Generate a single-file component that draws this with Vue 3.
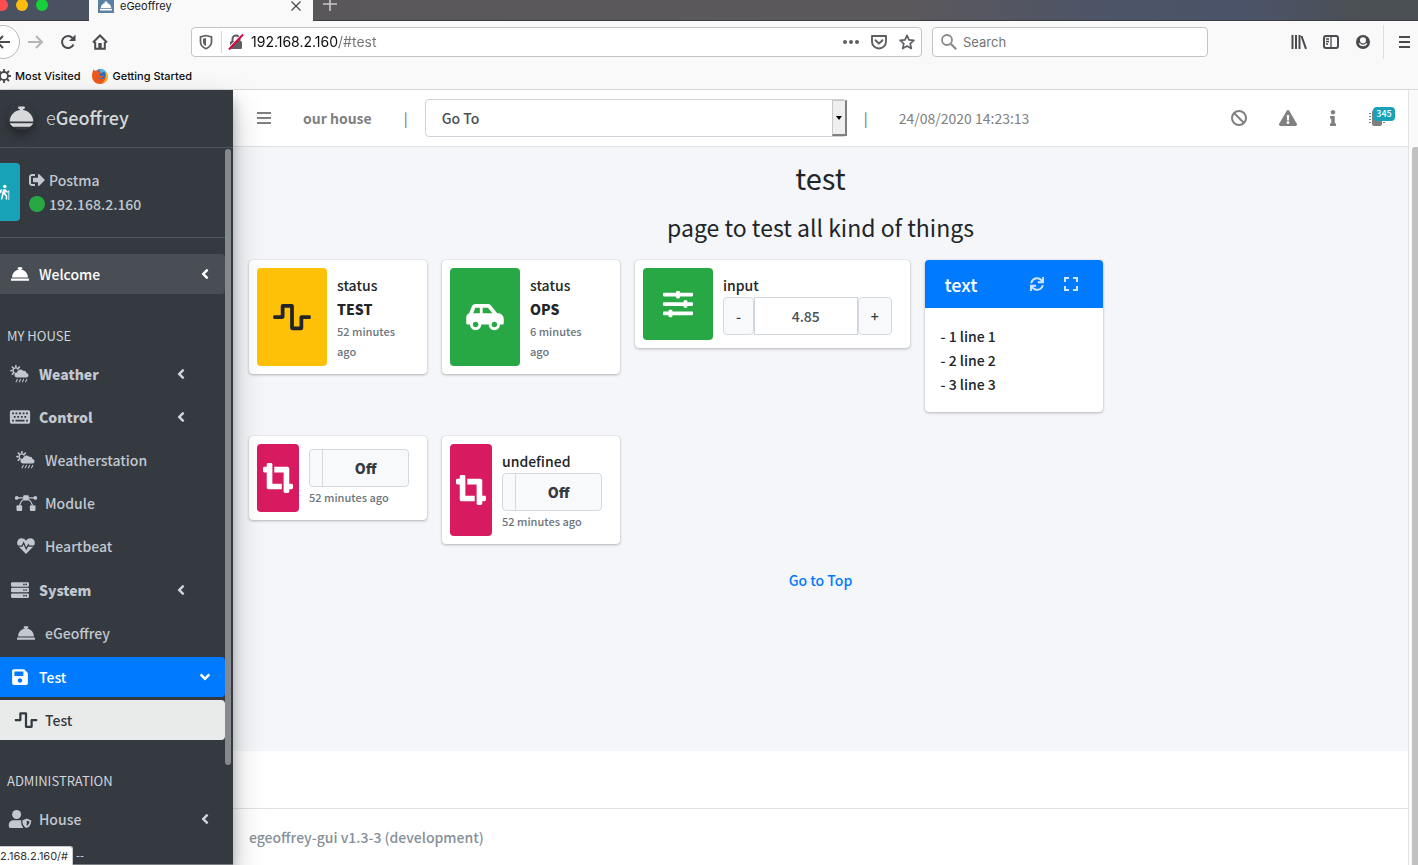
<script setup>
import { ref } from 'vue'

const url = ref('192.168.2.160/#test')
const search = ref('')
const amount = ref('4.85')
const goTo = ref('Go To')

const myHouse = [
  [
    { label: 'Weather', icon: 'weather', bold: true, arrow: 'inset' },
    { label: 'Control', icon: 'keyboard', bold: true, arrow: 'inset' },
    { label: 'Weatherstation', icon: 'weather', nested: true },
    { label: 'Module', icon: 'nodes', nested: true },
    { label: 'Heartbeat', icon: 'heart', nested: true }
  ],
  [
    { label: 'System', icon: 'server', bold: true, arrow: 'inset' },
    { label: 'eGeoffrey', icon: 'bell', nested: true }
  ],
  [
    { label: 'Test', icon: 'save', current: true, arrow: 'down' },
    { label: 'Test', icon: 'wave', nested: true, selected: true }
  ]
]
const administration = [{ label: 'House', icon: 'usershield' }]
const statuses = [
  { value: 'TEST', time: '52 minutes ago', icon: 'wave', tone: 'warning' },
  { value: 'OPS', time: '6 minutes ago', icon: 'car', tone: 'success' }
]
const switches = [{ label: '' }, { label: 'undefined' }]
const lines = ['- 1 line 1', '- 2 line 2', '- 3 line 3']
</script>

<template>
  <svg class="sprite" aria-hidden="true">
    <symbol id="bell" viewBox="0 0 512 512"><path d="M288 130.54V112h16c8.84 0 16-7.16 16-16V80c0-8.84-7.16-16-16-16h-96c-8.84 0-16 7.16-16 16v16c0 8.84 7.16 16 16 16h16v18.54C115.49 146.11 32 239.18 32 352h448c0-112.82-83.49-205.89-192-221.46zM496 384H16c-8.84 0-16 7.16-16 16v32c0 8.84 7.16 16 16 16h480c8.84 0 16-7.16 16-16v-32c0-8.84-7.16-16-16-16z" /></symbol>
    <symbol id="wave" viewBox="0 0 640 512"><path d="M476 480H324a36 36 0 0 1-36-36V96h-96v156a36 36 0 0 1-36 36H16a16 16 0 0 1-16-16v-32a16 16 0 0 1 16-16h112V68a36 36 0 0 1 36-36h152a36 36 0 0 1 36 36v348h96V260a36 36 0 0 1 36-36h140a16 16 0 0 1 16 16v32a16 16 0 0 1-16 16H512v156a36 36 0 0 1-36 36z" /></symbol>
    <symbol id="angle" viewBox="0 0 256 512"><path d="M31.7 239l136-136c9.4-9.4 24.6-9.4 33.9 0l22.6 22.6c9.4 9.4 9.4 24.6 0 33.9L127.9 256l96.4 96.4c9.4 9.4 9.4 24.6 0 33.9L201.7 409c-9.4 9.4-24.6 9.4-33.9 0l-136-136c-9.5-9.4-9.5-24.6-.1-34z" /></symbol>
    <symbol id="save" viewBox="0 0 448 512"><path d="M433.941 129.941l-83.882-83.882A48 48 0 0 0 316.118 32H48C21.49 32 0 53.49 0 80v352c0 26.51 21.49 48 48 48h352c26.51 0 48-21.49 48-48V163.882a48 48 0 0 0-14.059-33.941zM224 416c-35.346 0-64-28.654-64-64 0-35.346 28.654-64 64-64s64 28.654 64 64c0 35.346-28.654 64-64 64zm96-304.52V212c0 6.627-5.373 12-12 12H76c-6.627 0-12-5.373-12-12V108c0-6.627 5.373-12 12-12h228.52c3.183 0 6.235 1.264 8.485 3.515l3.48 3.48A11.996 11.996 0 0 1 320 111.48z" /></symbol>
    <symbol id="server" viewBox="0 0 512 512">
      <path fill-rule="evenodd" d="M32 32h448a32 32 0 0 1 32 32v64a32 32 0 0 1-32 32H32a32 32 0 0 1-32-32V64a32 32 0 0 1 32-32zM432 72a24 24 0 1 0 0 48a24 24 0 1 0 0-48zM368 72a24 24 0 1 0 0 48a24 24 0 1 0 0-48zM32 192h448a32 32 0 0 1 32 32v64a32 32 0 0 1-32 32H32a32 32 0 0 1-32-32v-64a32 32 0 0 1 32-32zM432 232a24 24 0 1 0 0 48a24 24 0 1 0 0-48zM368 232a24 24 0 1 0 0 48a24 24 0 1 0 0-48zM32 352h448a32 32 0 0 1 32 32v64a32 32 0 0 1-32 32H32a32 32 0 0 1-32-32v-64a32 32 0 0 1 32-32zM432 392a24 24 0 1 0 0 48a24 24 0 1 0 0-48zM368 392a24 24 0 1 0 0 48a24 24 0 1 0 0-48z" />
    </symbol>
    <symbol id="keyboard" viewBox="0 0 576 512">
      <path fill-rule="evenodd" d="M48 64h480a48 48 0 0 1 48 48v288a48 48 0 0 1-48 48H48a48 48 0 0 1-48-48V112a48 48 0 0 1 48-48zM64 128v52h52v-52zM160 128v52h52v-52zM256 128v52h60v-52zM364 128v52h52v-52zM460 128v52h52v-52zM112 228v52h52v-52zM208 228v52h52v-52zM312 228v52h52v-52zM412 228v52h52v-52zM64 336v46h52v-46zM160 336v46h256v-46zM460 336v46h52v-46z" />
    </symbol>
    <symbol id="weather" viewBox="0 0 576 512">
      <g stroke="currentColor" stroke-width="34" stroke-linecap="round" fill="none">
        <circle cx="170" cy="160" r="76" />
        <path d="M170 20v34M170 274v24M30 160h34M70 60l26 26M270 60l-24 24M70 260l26-26" stroke-width="44" />
      </g>
      <path class="halo" d="M200 372a86 86 0 0 1-10-170a110 110 0 0 1 190-60a92 92 0 0 1 106 72a80 80 0 0 1-6 158z" />
      <path d="M200 358a70 70 0 0 1 0-142a100 100 0 0 1 176-50a80 80 0 0 1 98 62a66 66 0 0 1 6 130z" />
      <path d="M210 410l-34 70M300 410l-34 70M390 410l-34 70M480 410l-34 70" stroke="currentColor" stroke-width="30" stroke-linecap="round" />
    </symbol>
    <symbol id="nodes" viewBox="0 0 640 512">
      <path d="M64 112h192M384 112h192M256 150Q160 210 136 320M384 150Q480 210 504 320" stroke="currentColor" stroke-width="34" fill="none" />
      <circle cx="56" cy="112" r="54" /><circle cx="584" cy="112" r="54" />
      <rect x="240" y="32" width="160" height="150" rx="28" /><rect x="50" y="320" width="160" height="160" rx="28" /><rect x="430" y="320" width="160" height="160" rx="28" />
    </symbol>
    <symbol id="heart" viewBox="0 0 512 512">
      <path d="M256 484L45 268C-10 210-8 120 42 70C96 16 190 22 256 104C322 22 416 16 470 70C520 120 522 210 467 268z" />
      <path class="cut" d="M0 262h146l42-96l74 170l60-116l24 42h166" />
    </symbol>
    <symbol id="usershield" viewBox="0 0 640 512">
      <circle cx="224" cy="128" r="128" />
      <path d="M134 288h180c30 0 38 4 38 20c0 90 18 140 62 204H48a48 48 0 0 1-48-48v-42a134 134 0 0 1 134-134z" />
      <path fill-rule="evenodd" d="M512 242l128 54c0 108-42 178-128 216c-86-38-128-108-128-216zM512 296v158c52-28 76-68 78-124z" />
    </symbol>
    <symbol id="sliders" viewBox="0 0 512 512"><path d="M496 384H160v-16c0-8.8-7.2-16-16-16h-32c-8.8 0-16 7.2-16 16v16H16c-8.8 0-16 7.2-16 16v32c0 8.8 7.2 16 16 16h80v16c0 8.8 7.2 16 16 16h32c8.8 0 16-7.2 16-16v-16h336c8.8 0 16-7.2 16-16v-32c0-8.8-7.2-16-16-16zm0-160h-80v-16c0-8.8-7.2-16-16-16h-32c-8.8 0-16 7.2-16 16v16H16c-8.8 0-16 7.2-16 16v32c0 8.8 7.2 16 16 16h336v16c0 8.8 7.2 16 16 16h32c8.8 0 16-7.2 16-16v-16h80c8.8 0 16-7.2 16-16v-32c0-8.8-7.2-16-16-16zm0-160H288V48c0-8.8-7.2-16-16-16h-32c-8.8 0-16 7.2-16 16v16H16C7.2 64 0 71.2 0 80v32c0 8.8 7.2 16 16 16h208v16c0 8.8 7.2 16 16 16h32c8.8 0 16-7.2 16-16v-16h208c8.8 0 16-7.2 16-16V80c0-8.8-7.2-16-16-16z" /></symbol>
    <symbol id="crop" viewBox="0 0 512 512"><path d="M488 352h-40V96c0-17.67-14.33-32-32-32H192v96h160v328c0 13.25 10.75 24 24 24h48c13.25 0 24-10.75 24-24v-40h40c13.25 0 24-10.75 24-24v-48c0-13.26-10.75-24-24-24zM160 24c0-13.26-10.75-24-24-24H88C74.75 0 64 10.74 64 24v40H24C10.75 64 0 74.74 0 88v48c0 13.25 10.75 24 24 24h40v256c0 17.67 14.33 32 32 32h224v-96H160V24z" /></symbol>
    <symbol id="car" viewBox="0 0 640 512"><path d="M544 192h-16L419.22 56.02A64.025 64.025 0 0 0 369.24 32H155.33c-26.17 0-49.7 15.93-59.42 40.23L48 194.26C20.44 201.4 0 226.21 0 256v112c0 8.84 7.16 16 16 16h48c0 53.02 42.98 96 96 96s96-42.98 96-96h128c0 53.02 42.98 96 96 96s96-42.98 96-96h48c8.84 0 16-7.16 16-16v-80c0-53.02-42.98-96-96-96zM160 432c-26.47 0-48-21.53-48-48s21.53-48 48-48 48 21.53 48 48-21.53 48-48 48zm72-240H116.93l38.4-96H232v96zm48 0V96h89.24l76.8 96H280zm200 240c-26.47 0-48-21.53-48-48s21.53-48 48-48 48 21.53 48 48-21.53 48-48 48z" /></symbol>
    <symbol id="signout" viewBox="0 0 512 512"><path d="M497 273L329 441c-15 15-41 4.5-41-17v-96H152c-13.3 0-24-10.7-24-24v-96c0-13.3 10.7-24 24-24h136V88c0-21.4 25.9-32 41-17l168 168c9.3 9.4 9.3 24.6 0 34zM192 436v-40c0-6.6-5.4-12-12-12H96c-17.7 0-32-14.3-32-32V160c0-17.7 14.3-32 32-32h84c6.6 0 12-5.4 12-12V76c0-6.6-5.4-12-12-12H96c-53 0-96 43-96 96v192c0 53 43 96 96 96h84c6.6 0 12-5.4 12-12z" /></symbol>
    <symbol id="sync" viewBox="0 0 512 512"><path d="M440.65 12.57l4 82.77A247.16 247.16 0 0 0 255.83 8C134.73 8 33.91 94.92 12.29 209.82A12 12 0 0 0 24.09 224h49.05a12 12 0 0 0 11.67-9.26 175.91 175.91 0 0 1 317-56.94l-101.46-4.86a12 12 0 0 0-12.57 12v47.41a12 12 0 0 0 12 12H500a12 12 0 0 0 12-12V12a12 12 0 0 0-12-12h-47.37a12 12 0 0 0-11.98 12.57zM255.83 432a175.61 175.61 0 0 1-146-77.8l101.8 4.87a12 12 0 0 0 12.57-12v-47.4a12 12 0 0 0-12-12H12a12 12 0 0 0-12 12V500a12 12 0 0 0 12 12h47.35a12 12 0 0 0 12-12.6l-4.15-82.57A247.17 247.17 0 0 0 255.83 504c121.11 0 221.93-86.92 243.55-201.82a12 12 0 0 0-11.8-14.18h-49.05a12 12 0 0 0-11.67 9.26A175.86 175.86 0 0 1 255.83 432z" /></symbol>
    <symbol id="expand" viewBox="0 0 14 14"><path d="M1 5V1h4M9 1h4v4M13 9v4H9M5 13H1V9" fill="none" stroke="currentColor" stroke-width="2" /></symbol>
    <symbol id="bars" viewBox="0 0 14 14"><path d="M0 2h14M0 7h14M0 12h14" stroke="currentColor" stroke-width="2" /></symbol>
    <symbol id="ban" viewBox="0 0 16 16"><path d="M3 3l10 10" stroke="currentColor" stroke-width="2" /><circle cx="8" cy="8" r="7" fill="none" stroke="currentColor" stroke-width="2" /></symbol>
    <symbol id="warn" viewBox="0 0 18 16"><path fill-rule="evenodd" d="M9 0a1.500 1.500 0 0 1 1.300.8l7.500 13a1.500 1.500 0 0 1-1.300 2.200h-15a1.500 1.500 0 0 1-1.300-2.200l7.500-13a1.500 1.500 0 0 1 1.300-.8zM7.800 5l.3 5.500h1.800l.3-5.500zM9 11.300a1.400 1.400 0 1 0 0 2.800a1.400 1.400 0 1 0 0-2.800z" /></symbol>
    <symbol id="info" viewBox="0 0 192 512"><path d="M20 424.229h20V279.771H20c-11.046 0-20-8.954-20-20V212c0-11.046 8.954-20 20-20h112c11.046 0 20 8.954 20 20v212.229h20c11.046 0 20 8.954 20 20V492c0 11.046-8.954 20-20 20H20c-11.046 0-20-8.954-20-20v-47.771c0-11.046 8.954-20 20-20zM96 0C56.235 0 24 32.235 24 72s32.235 72 72 72 72-32.235 72-72S135.764 0 96 0z" /></symbol>
    <symbol id="chip" viewBox="0 0 16 16"><rect x="3" y="0" width="10" height="16" rx="2" /><path d="M1 3v11M15 3v11" stroke="currentColor" stroke-width="2" stroke-dasharray="1 2" /></symbol>
    <symbol id="hiker" viewBox="0 0 16 20"><circle cx="9" cy="3" r="2.200" /><path d="M7 6.500h3.500L12 9h2v1.500h-3L10 9.300v3l2 2.200v5h-1.800v-4.200L7.500 12.800L5.800 19.500H4L6 10z" /><path d="M5.800 6.500L4.500 11.500L1.800 11c0-2.500 1-4.500 4-4.500z" /><path d="M14 8v12" stroke="currentColor" stroke-width="1" /></symbol>
  </svg>

  <div class="window">
    <header class="chrome">
      <div class="tabstrip">
        <div class="lights"><i class="red"></i><i class="yellow"></i><i class="green"></i></div>
        <div class="tab">
          <span class="favicon"><svg><use href="#bell" /></svg></span>
          <span class="tab-title">eGeoffrey</span>
          <button class="plain tab-close" aria-label="Close tab">
            <svg viewBox="0 0 10 10"><path d="M0.500 0.500l9 9M9.500 0.500l-9 9" stroke="currentColor" stroke-width="1.300" /></svg>
          </button>
        </div>
        <button class="plain new-tab" aria-label="New tab">
          <svg viewBox="0 0 14 14"><path d="M7 0v14M0 7h14" stroke="currentColor" stroke-width="1.600" /></svg>
        </button>
      </div>

      <div class="toolbar">
        <div class="nav-buttons">
          <button class="plain back" aria-label="Back"><svg viewBox="0 0 16 16"><path d="M15 8H2M8 2L2 8l6 6" /></svg></button>
          <button class="plain forward" aria-label="Forward"><svg viewBox="0 0 16 16"><path d="M0 8h14M8 2l6 6l-6 6" /></svg></button>
          <button class="plain" aria-label="Reload"><svg viewBox="0 0 16 16"><path d="M13.500 10.500A6 6 0 1 1 12.500 4" /><path class="solid" d="M15.500 0.500v6.500H9z" /></svg></button>
          <button class="plain" aria-label="Home"><svg viewBox="0 0 16 16"><path d="M1 8.500L8 1.500l7 7M3.200 8v6.800h9.600V8" /><path class="solid" d="M6.300 9h3.400v6H6.300z" /></svg></button>
        </div>
        <div class="urlbar">
          <svg class="i16" viewBox="0 0 16 16"><path d="M8 1.500L2.500 2.800V8c0 3.500 2 5.300 5.500 6.700c3.500-1.400 5.500-3.200 5.500-6.700V2.800z" fill="none" stroke="currentColor" stroke-width="1.700" /><path d="M8 4L5 4.800V8c0 2 1 3 3 4z" /></svg>
          <span class="rule"></span>
          <svg class="i16" viewBox="0 0 16 16"><path d="M4.500 8V5a3.500 3.500 0 0 1 7 0v3" fill="none" stroke="currentColor" stroke-width="2" /><rect x="2" y="7" width="12" height="8" rx="1.500" /><path d="M0.500 14L13.500 1" stroke="#fff" stroke-width="1.500" /><path d="M1 15.500L15 0.500" stroke="#d7003f" stroke-width="2" /></svg>
          <input v-model="url" class="url" type="text" aria-label="Address">
          <button class="plain" aria-label="Page actions"><svg class="i16" viewBox="0 0 16 16"><circle cx="2" cy="8" r="2" /><circle cx="8" cy="8" r="2" /><circle cx="14" cy="8" r="2" /></svg></button>
          <button class="plain" aria-label="Save to Pocket"><svg class="i16" viewBox="0 0 16 16"><path d="M1 2h14v5.500a7 7 0 0 1-14 0z M4.500 6.200L8 9.600l3.500-3.400" fill="none" stroke="currentColor" stroke-width="1.900" stroke-linejoin="round" stroke-linecap="round" /></svg></button>
          <button class="plain" aria-label="Bookmark"><svg class="i16" viewBox="0 0 16 16"><path d="M8 1.300l2 4.500l4.900.5l-3.700 3.300l1.100 4.900L8 12l-4.300 2.500l1.100-4.900L1.100 6.300L6 5.800z" fill="none" stroke="currentColor" stroke-width="1.700" stroke-linejoin="round" /></svg></button>
        </div>
        <div class="searchbar">
          <svg class="i16" viewBox="0 0 16 16"><circle cx="6" cy="6" r="5" fill="none" stroke="currentColor" stroke-width="1.800" /><path d="M9.700 9.700l5.500 5.500" stroke="currentColor" stroke-width="2.200" /></svg>
          <input v-model="search" type="search" placeholder="Search" aria-label="Search">
        </div>
        <div class="tools">
          <button class="plain" aria-label="Library"><svg class="i16" viewBox="0 0 16 16"><path d="M1.500 1v14M5 1v14M8.500 1v14M10.500 2l4.500 12.800" stroke="currentColor" stroke-width="2" /></svg></button>
          <button class="plain" aria-label="Sidebars"><svg class="i16" viewBox="0 0 16 16"><rect x="1" y="2" width="14" height="12" rx="2" fill="none" stroke="currentColor" stroke-width="2" /><path d="M8 2v12M3 5h3M3 7.500h3M3 10h2" stroke="currentColor" stroke-width="1.300" /></svg></button>
          <button class="plain" aria-label="Account"><svg class="i16" viewBox="0 0 16 16"><path fill-rule="evenodd" d="M8 1a7 7 0 1 0 0 14A7 7 0 1 0 8 1zM8 3.300a3 3 0 0 1 0 6.100a3 3 0 0 1 0-6.100zM3.600 9.300h1.500a3.600 3.600 0 0 0 5.800 0h1.500a4.700 4.700 0 0 1-8.800 0z" /></svg></button>
        </div>
        <button class="plain app-menu" aria-label="Open menu"><svg viewBox="0 0 14 14"><path d="M1 2h11M1 7h11M1 12h11" stroke="currentColor" stroke-width="2" /></svg></button>
      </div>

      <nav class="bookmarks">
        <a href="#"><svg class="gear" viewBox="0 0 14 14"><circle cx="7" cy="7" r="4" fill="none" stroke="currentColor" stroke-width="1.800" /><path d="M7 0v3M7 11v3M0 7h3M11 7h3M2 2l2 2M10 10l2 2M2 12l2-2M10 4l2-2" stroke="currentColor" stroke-width="1.800" /></svg>Most Visited</a>
        <a href="#"><svg class="fox" viewBox="0 0 16 16"><circle cx="8.500" cy="7.500" r="6.500" fill="#2d6fc0" /><path d="M7 1.500c3-1 6 0 7 3c-2-1-4-.5-5 1z" fill="#58b5ec" /><path d="M1.500 1.500c1 1 1.800 1.300 3.500 1.200c1-.7 2-.9 2.700-.9c-1.200.8-1.300 1.700-1 2.300c1 .3 2 .2 2.300.7c-.2 1-1.600 1-1.800 2c1 1 2.800 2.200 5 .4c-.6 2.800-4.500 3.800-6.700 2.300c2.500 2.800 7 2 8.200-1.400c.5-1.600.3-3-.5-4.600c2.500 2 3 5 2.300 7.300C14.500 14 11.500 16 8 16c-4.500 0-8-3.500-8-8c0-2.500.7-4.500 1.500-6.500z" fill="#ee5a1c" /><path d="M13.300 3.300c2.500 2 3 5 2.300 7.300c-.9 2.800-3.200 4.700-6 5.200c3.200-2 5-6 3.700-12.500z" fill="#fbb42c" /></svg>Getting Started</a>
      </nav>
    </header>

    <div class="page">
      <aside class="sidebar">
        <a class="brand" href="#"><svg><use href="#bell" /></svg><span>e<b>Geoffrey</b></span></a>
        <div class="side-scroll">
          <div class="user">
            <span class="avatar"><svg><use href="#hiker" /></svg></span>
            <div class="user-lines">
              <a href="#"><svg><use href="#signout" /></svg>Postma</a>
              <a href="#"><i class="dot"></i>192.168.2.160</a>
            </div>
          </div>
          <nav class="menu">
            <a class="item welcome" href="#"><svg class="ico"><use href="#bell" /></svg><span>Welcome</span><svg class="arrow"><use href="#angle" /></svg></a>
            <h2>MY HOUSE</h2>
            <div v-for="(group, g) in myHouse" :key="g" class="group">
              <a v-for="item in group" :key="item.icon + item.label" href="#" class="item" :class="{ nested: item.nested, bold: item.bold, current: item.current, selected: item.selected }">
                <svg class="ico"><use :href="'#' + item.icon" /></svg><span>{{ item.label }}</span>
                <svg v-if="item.arrow" class="arrow" :class="item.arrow"><use href="#angle" /></svg>
              </a>
            </div>
            <h2>ADMINISTRATION</h2>
            <a v-for="item in administration" :key="item.label" href="#" class="item">
              <svg class="ico"><use :href="'#' + item.icon" /></svg><span>{{ item.label }}</span>
              <svg class="arrow"><use href="#angle" /></svg>
            </a>
            <div class="more">--</div>
          </nav>
          <i class="side-thumb"></i>
        </div>
      </aside>

      <div class="body">
        <div class="topbar">
          <button class="plain" aria-label="Toggle menu"><svg class="bars"><use href="#bars" /></svg></button>
          <b class="house">our house</b>
          <span class="pipe">|</span>
          <div class="select">
            <select v-model="goTo" aria-label="Go to page"><option>Go To</option></select>
            <i class="select-arrow"></i>
          </div>
          <span class="pipe">|</span>
          <time>24/08/2020 14:23:13</time>
          <div class="status-icons">
            <a href="#" aria-label="Blocked"><svg class="w16"><use href="#ban" /></svg></a>
            <a href="#" aria-label="Warnings"><svg class="w18"><use href="#warn" /></svg></a>
            <a href="#" aria-label="Information"><svg class="w6"><use href="#info" /></svg></a>
            <a href="#" aria-label="Modules" class="badged"><svg class="w16"><use href="#chip" /></svg><span class="badge">345</span></a>
          </div>
        </div>

        <main>
          <h1>test</h1>
          <p class="subtitle">page to test all kind of things</p>
          <div class="cards">
            <section v-for="s in statuses" :key="s.value" class="card info">
              <span class="tile" :class="s.tone"><svg class="wide"><use :href="'#' + s.icon" /></svg></span>
              <div class="content"><span>status</span><b>{{ s.value }}</b><small>{{ s.time }}</small></div>
            </section>
            <section class="card info span3">
              <span class="tile success"><svg class="square"><use href="#sliders" /></svg></span>
              <div class="content">
                <label for="amount">input</label>
                <div class="stepper"><button>-</button><input id="amount" v-model="amount" type="text"><button class="plus">+</button></div>
              </div>
            </section>
            <section class="card">
              <div class="card-head"><h3>text</h3><button class="plain" aria-label="Refresh"><svg><use href="#sync" /></svg></button><button class="plain" aria-label="Maximize"><svg><use href="#expand" /></svg></button></div>
              <div class="card-body"><div v-for="l in lines" :key="l">{{ l }}</div></div>
            </section>
          </div>
          <div class="cards">
            <section v-for="(s, i) in switches" :key="i" class="card info">
              <span class="tile narrow"><svg class="square"><use href="#crop" /></svg></span>
              <div class="content">
                <span v-if="s.label">{{ s.label }}</span>
                <button class="toggle" role="switch" aria-checked="false"><i></i><b>Off</b></button>
                <small>52 minutes ago</small>
              </div>
            </section>
          </div>
          <a class="to-top" href="#">Go to Top</a>
        </main>
        <footer>egeoffrey-gui v1.3-3 (development)</footer>
      </div>
      <div class="page-scroll"><i></i></div>
    </div>
    <div class="link-status">2.168.2.160/#</div>
  </div>
</template>

<style>
body { margin: 0; }
</style>

<style scoped>
* { box-sizing: border-box; }
.sprite { position: absolute; width: 0; height: 0; }
svg { display: block; fill: currentColor; flex: none; }
a { color: inherit; text-decoration: none; }
b { font-weight: 900; }
.plain { border: 0; padding: 0; background: none; color: inherit; font: inherit; display: flex; align-items: center; justify-content: center; }
.halo { fill: #343a40; }
.cut { fill: none; stroke: #343a40; stroke-width: 36; }
.i16, .w16 { width: 16px; height: 16px; }
.window { height: 100vh; display: flex; flex-direction: column; overflow: hidden; position: relative; font: 500 14px/24px "Noto Sans CJK SC", "Noto Sans", sans-serif; color: #212529; }

/* browser chrome */
.chrome { flex: none; background: #f9f9fa; border-bottom: 1px solid #d9d9dc; font-family: Inter, "Liberation Sans", sans-serif; font-weight: 400; color: #4a4a4f; }
.tabstrip { height: 21px; display: flex; background: linear-gradient(90deg, #4a5161 0, #4a5161 88px, #5a575b 320px, #5b585b 900px, #4c5468 1120px, #4b5368 1250px, #4b5054 1360px); border-bottom: 1px solid #3d3e44; }
.lights { width: 89px; display: flex; gap: 8px; margin-left: -4px; }
.lights i { width: 12px; height: 12px; border-radius: 50%; margin-top: -1px; }
.red { background: #fc4e50; }
.yellow { background: #fdbc10; }
.green { background: #17cf3a; }
.tab { width: 224px; height: 21px; margin-left: 4px; padding: 0 12px 10px 9px; background: #f9f9fa; display: flex; align-items: center; gap: 6px; }
.favicon { width: 16px; height: 14px; background: #5b7ea3; color: #fff; display: flex; align-items: center; justify-content: center; }
.favicon svg { width: 12px; height: 12px; }
.tab-title { flex: 1; font-size: 11px; line-height: 12px; color: #18181a; }
.tab-close svg { width: 10px; height: 10px; }
.new-tab { color: #c8c9ce; margin: -12px 0 0 10px; }
.new-tab svg { width: 14px; height: 14px; }
.toolbar { height: 41px; display: flex; align-items: center; }
.nav-buttons { width: 191px; display: flex; gap: 16px; }
.nav-buttons svg { width: 16px; height: 16px; fill: none; stroke: currentColor; stroke-width: 2; }
.nav-buttons .solid { fill: currentColor; stroke: none; }
.back { width: 34px; height: 34px; border: 1px solid #b9b9bc; border-radius: 50%; background: #fff; margin-left: -14px; margin-right: -8px; }
.forward { color: #b5b5b8; }
.urlbar, .searchbar { height: 30px; background: #fff; border: 1px solid #c4c4c6; border-radius: 4px; display: flex; align-items: center; color: #5f5f63; }
.urlbar { flex: 1; padding: 0 6px; gap: 12px; min-width: 0; }
.urlbar .rule { width: 1px; height: 22px; background: #d7d7db; margin: 0 -6px 0 -5px; }
.urlbar input, .searchbar input { flex: 1; min-width: 0; border: 0; padding: 0; outline: 0; font: 14px/20px Inter, "Liberation Sans", sans-serif; }
.url { color: transparent; background: linear-gradient(90deg, #0c0c0d 88px, #737373 88px) text; margin-left: -5px; }
.searchbar { width: 276px; margin-left: 10px; padding: 0 8px; gap: 6px; color: #8a8a8e; }
.searchbar input { background: none; font-size: 13px; color: #333; }
.searchbar input::placeholder { color: #737373; opacity: 1; }
.tools { display: flex; gap: 16px; margin-left: 83px; }
.app-menu { height: 34px; margin-left: 12px; border-left: 1px solid #dedee0; padding: 0 6px 0 14px; }
.app-menu svg { width: 14px; height: 14px; }
.bookmarks { height: 27px; display: flex; gap: 12px; font-size: 11px; line-height: 14px; font-weight: 500; color: #0c0c0d; align-items: center; margin-left: -3px; }
.bookmarks a { display: flex; align-items: center; gap: 4px; }
.gear { width: 14px; height: 14px; color: #4a4a4f; }
.fox { width: 16px; height: 16px; }

/* sidebar */
.page { flex: 1; min-height: 0; display: flex; }
.sidebar { width: 233px; flex: none; background: #343a40; color: #c2c7d0; display: flex; flex-direction: column; box-shadow: 0 14px 28px rgba(0,0,0,.25), 0 10px 10px rgba(0,0,0,.22); position: relative; z-index: 1; border-bottom: 1px solid #7b7f84; }
.brand { height: 58px; flex: none; border-bottom: 1px solid #4b545c; display: flex; align-items: center; gap: 11px; padding: 0 0 4px 8px; font-size: 18px; font-weight: 300; color: #d6d8d9; }
.brand svg { width: 27px; height: 27px; border-radius: 50%; box-shadow: 0 6px 8px rgba(0,0,0,.3); }
.brand b { font-weight: 500; }
.side-scroll { flex: 1; min-height: 0; overflow: hidden; position: relative; padding-right: 8px; }
.side-thumb { position: absolute; right: 2px; top: 1px; width: 6px; height: 86%; border-radius: 3px; background: #86898d; }
.user { height: 90px; display: flex; align-items: center; gap: 9px; padding-bottom: 2px; border-bottom: 1px solid #4f5962; }
.avatar { width: 20px; height: 58px; background: #17a2b8; border-radius: 0 4px 4px 0; color: #fff; display: flex; align-items: center; }
.avatar svg { width: 16px; height: 16px; margin-left: -4px; }
.user-lines a { display: flex; align-items: center; gap: 4px; }
.user-lines svg { width: 16px; height: 16px; }
.dot { width: 16px; height: 16px; border-radius: 50%; background: #28a745; }
.menu { padding-top: 16px; }
.menu h2 { margin: 0; padding: 31px 0 8px 7px; font: inherit; font-size: 13px; font-weight: 400; line-height: 21px; color: #d0d4db; }
.group { display: flex; flex-direction: column; gap: 3px; margin-bottom: 4px; }
.group + h2 { margin-top: -5px; }
.item { height: 40px; display: flex; align-items: center; padding: 0 16px 0 8px; border-radius: 0 4px 4px 0; }
.item.nested { padding-left: 14px; }
.item span { flex: 1; }
.ico { width: 24px; height: 18px; margin-right: 7px; }
.arrow { width: 8px; height: 16px; color: #d0d4db; }
.arrow.inset { margin-right: 24px; }
.arrow.down { transform: rotate(-90deg); color: #fff; }
.item.bold { font-weight: 900; }
.welcome { background: #494e54; color: #fff; }
.welcome .arrow { color: #fff; }
.current { background: #007bff; color: #fff; }
.selected { background: #e9ebea; color: #343a40; }
.more { padding: 10px 0 0 76px; font-size: 11px; line-height: 12px; }

/* top bar */
.body { flex: 1; min-width: 0; display: flex; flex-direction: column; background: #fff; }
.topbar { height: 57px; flex: none; border-bottom: 1px solid #dee2e6; display: flex; align-items: center; padding: 0 13px 0 24px; color: #808080; }
.bars { width: 14px; height: 14px; }
.house { margin: 0 32px; font-weight: 700; }
.pipe { width: 4px; }
.select { width: 422px; height: 38px; margin: 0 17px; position: relative; }
select { appearance: none; width: 100%; height: 100%; border: 1px solid #ced4da; border-radius: 4px; background: #fff; padding: 0 16px; font: inherit; color: #495057; }
.select-arrow { position: absolute; right: 0; top: 1px; bottom: 1px; width: 15px; background: #efefef; border: 1px solid #c8c8c8; border-right: 2px solid #808080; border-bottom: 2px solid #808080; display: flex; align-items: center; justify-content: center; pointer-events: none; }
.select-arrow::after { content: ""; border: 3px solid transparent; border-top: 4px solid #000; border-bottom: 0; }
time { margin-left: 31px; font-weight: 400; }
.status-icons { margin-left: auto; display: flex; align-items: center; gap: 32px; }
.w18 { width: 18px; height: 16px; }
.w6 { width: 8px; height: 16px; }
.badged { position: relative; width: 26px; }
.badge { position: absolute; left: 4px; top: -3px; width: 22px; height: 14px; border-radius: 4px; background: #17a2b8; color: #fff; font-size: 9px; line-height: 14px; text-align: center; }

/* content */
main { flex: 1; background: #f4f6f9; padding: 11px 16px 0; margin-bottom: 57px; text-align: center; }
h1 { margin: 0; font-size: 29px; line-height: 38px; font-weight: 400; }
.subtitle { margin: 16px 0 18px; font-size: 23px; line-height: 30px; font-weight: 400; }
.cards { display: grid; grid-template-columns: repeat(12, 1fr); gap: 15px; align-items: start; text-align: left; margin-bottom: 24px; }
.card { grid-column: span 2; background: #fff; border-radius: 4px; overflow: hidden; box-shadow: 0 0 1px rgba(0,0,0,.2), 0 1px 3px rgba(0,0,0,.25); }
.span3 { grid-column: span 3; }
.info { display: flex; padding: 8px; }
.tile { width: 70px; flex: none; border-radius: 4px; display: flex; align-items: center; justify-content: center; color: #fff; }
.tile.narrow { width: 42px; background: #d81b60; }
.warning { background: #ffc107; color: #212529; }
.success { background: #28a745; }
.wide { width: 38px; height: 30px; }
.square { width: 30px; height: 30px; }
.content { flex: 1; min-width: 0; padding: 5px 10px; display: flex; flex-direction: column; }
small { font-size: 11px; line-height: 20px; color: #6c757d; }
.stepper { display: flex; height: 38px; }
.stepper button, .toggle { background: #f8f9fa; border: 1px solid #d5d9dd; border-radius: 4px; font: inherit; color: #343a40; padding: 0; }
.stepper button { width: 31px; }
.stepper .plus { width: 34px; }
.stepper input { width: 104px; border: 1px solid #ced4da; text-align: center; font: inherit; color: #495057; padding: 0; }
.card-head { background: #007bff; color: #fff; height: 48px; padding: 0 25px 0 20px; display: flex; align-items: center; gap: 20px; }
.card-head h3 { margin: 0; flex: 1; font-size: 18px; font-weight: 500; }
.card-head svg { width: 14px; height: 14px; color: #cfe5ff; }
.card-body { padding: 16px; }
.toggle { width: 100px; height: 38px; display: flex; align-items: stretch; overflow: hidden; }
.toggle i { width: 13px; border-right: 1px solid #d5d9dd; }
.toggle b { flex: 1; line-height: 36px; }
.to-top { color: #007bff; }
footer { border-top: 1px solid #dee2e6; padding: 16px; color: #869099; }
.page-scroll { width: 10px; flex: none; background: #fafafa; border-left: 1px solid #e3e3e3; padding: 57px 0 0 3px; display: flex; }
.page-scroll i { flex: 1; background: #c1c1c1; border-radius: 3px 0 0 0; }
.link-status { position: absolute; left: 0; bottom: 0; z-index: 2; background: #fff; border: 1px solid #c9c9c9; border-left: 0; border-bottom: 0; border-radius: 0 3px 0 0; font: 11px/18px Inter, "Liberation Sans", sans-serif; padding-right: 4px; color: #333; }
</style>
